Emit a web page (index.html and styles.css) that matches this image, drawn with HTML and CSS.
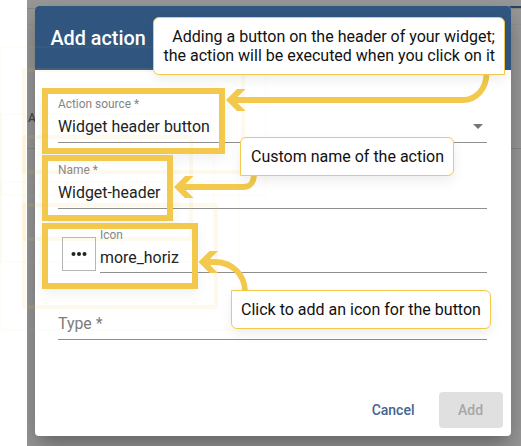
FILE: index.html
```html
<!DOCTYPE html>
<html lang="en">
<head>
<meta charset="utf-8">
<title>Add action</title>
<link rel="stylesheet" href="styles.css">
</head>
<body>
<div class="page">
  <div class="backdrop">
    <span class="rule rule-top"></span>
    <span class="rule rule-head"></span>
    <span class="rule rule-row"></span>
    <span class="bar"></span>
    <span class="letter">A</span>
    <section class="dialog">
      <header class="dialog-header"><h1>Add action</h1></header>
      <form class="fields">
        <div class="field select">
          <label>Action source *</label>
          <div class="value">Widget header button</div>
          <svg class="caret" width="10" height="5" viewBox="0 0 10 5"><path d="M0 0h10L5 5z"/></svg>
        </div>
        <div class="field">
          <label>Name *</label>
          <div class="value">Widget-header</div>
        </div>
        <div class="icon-row">
          <div class="icon-box">
            <svg width="18" height="6" viewBox="0 0 18 6"><circle cx="3.500" cy="3" r="2"/><circle cx="9" cy="3" r="2"/><circle cx="14.500" cy="3" r="2"/></svg>
          </div>
          <div class="field">
            <label>Icon</label>
            <div class="value">more_horiz</div>
          </div>
        </div>
        <div class="field empty">
          <div class="value">Type *</div>
        </div>
      </form>
      <footer class="actions">
        <span class="cancel">Cancel</span>
        <span class="add">Add</span>
      </footer>
    </section>
  </div>

  <div class="frame frame-source"></div>
  <div class="frame frame-name"></div>
  <div class="frame frame-icon"></div>

  <svg class="arrows" width="521" height="446" viewBox="0 0 521 446">
    <g class="shaft">
      <path d="M233 100H463C476 100 486.500 89 486.500 73"/>
      <path d="M181 187H244C250 187 254 182 254 174"/>
      <path d="M206 262H214C233 262 244.500 275 245 291"/>
    </g>
    <g class="head">
      <path d="M226 100l11-11h8.500l-9 9v4l9 9H237z"/>
      <path d="M174 187l11-11h8.500l-9 9v4l9 9H185z"/>
      <path d="M198.500 262l11-11h8.500l-9 9v4l9 9h-8.500z"/>
    </g>
  </svg>

  <div class="callout callout-source">Adding a button on the header of your widget;<br>the action will be executed when you click on it</div>
  <div class="callout callout-name">Custom name of the action</div>
  <div class="callout callout-icon">Click to add an icon for the button</div>
</div>
</body>
</html>
```

FILE: styles.css
```css
* { box-sizing: border-box; }
body {
  margin: 0;
  background: #fff;
  font-family: Roboto, "Liberation Sans", sans-serif;
  overflow: hidden;
}
.page {
  position: relative;
  width: 521px;
  height: 446px;
  overflow: hidden;
}
.backdrop {
  position: relative;
  height: 446px;
  margin-left: 27px;
  padding: 6px 10.500px 10px 7.500px;
  background: #999;
  overflow: hidden;
}
.rule {
  position: absolute;
  left: 0;
  right: 0;
  height: 1px;
  background: #888;
}
.rule-top { top: 8px; }
.rule-head { top: 24px; background: #939393; }
.rule-row { top: 148px; }
.bar {
  position: absolute;
  right: 0;
  top: 6px;
  width: 12px;
  height: 2px;
  background: #2b4563;
}
.letter {
  position: absolute;
  left: 1px;
  top: 111px;
  font-size: 12px;
  font-weight: 500;
  line-height: 14px;
  color: #4b4b4b;
}
.dialog {
  position: relative;
  display: flex;
  flex-direction: column;
  height: 430px;
  background: #fff;
  border-radius: 4px;
  box-shadow: 0 11px 15px -7px rgba(0,0,0,.2), 0 14px 28px 3px rgba(0,0,0,.14), 0 5px 20px 4px rgba(0,0,0,.06);
}
.dialog-header {
  height: 64px;
  padding: 0 16px;
  background: #305680;
  border-radius: 4px 4px 0 0;
  color: #fff;
}
h1 {
  margin: 0;
  font-size: 19.800px;
  font-weight: 500;
  line-height: 65px;
}
.fields {
  flex: 1;
  padding: 27px 24px 0 23.500px;
}
.field {
  position: relative;
  height: 46px;
  margin-bottom: 20px;
  border-bottom: 1px solid #8f8f8f;
}
.field label {
  display: block;
  height: 14px;
  font-size: 11.900px;
  line-height: 14px;
  color: #858585;
}
.value {
  font-size: 15.900px;
  line-height: 20px;
  margin-top: 5.500px;
  color: #222;
}
.caret {
  position: absolute;
  right: 4px;
  top: 27px;
  fill: #757575;
}
.icon-row {
  display: flex;
  gap: 4px;
  padding-left: 4px;
  margin-top: -2px;
}
.icon-row .field { flex: 1; }
.icon-row label { padding-top: 1px; }
.icon-row .value { margin-top: 6.500px; }
.icon-box {
  display: flex;
  align-items: center;
  justify-content: center;
  width: 34px;
  height: 34px;
  margin-top: 10px;
  border: 1px solid #b5b5b5;
}
.icon-box svg { fill: #222; }
.empty .value {
  padding-top: 20px;
  margin-top: 0;
  color: #7c7c7c;
}
.empty { margin-top: 1px; }
.actions {
  display: flex;
  justify-content: flex-end;
  align-items: center;
  gap: 24px;
  height: 52px;
  padding: 0 8px 0 0;
  font-size: 14px;
  font-weight: 500;
}
.cancel { color: #446491; }
.add {
  width: 64px;
  height: 36px;
  border-radius: 4px;
  background: #e0e0e0;
  color: #a6a6a6;
  text-align: center;
  line-height: 36px;
}
.frame {
  position: absolute;
  left: 42px;
  height: 66px;
  border: 6px solid #f2c94c;
  box-shadow: 0 5px 12px rgba(0,0,0,.06);
}
.frame-source { top: 88px; width: 183px; }
.frame-name { top: 155px; width: 131px; }
.frame-icon { top: 223px; width: 156px; }
.frame::before, .frame::after {
  content: "";
  position: absolute;
}
.frame::before {
  inset: -26px;
  border: 4px solid rgba(242,201,76,.1);
}
.frame::after {
  inset: -48px;
  border: 2px solid rgba(242,201,76,.04);
}
.arrows {
  position: absolute;
  left: 0;
  top: 0;
}
.shaft {
  fill: none;
  stroke: #f2c94c;
  stroke-width: 5.800;
}
.head { fill: #f2c94c; }
.callout {
  position: absolute;
  border: 1px solid #f2c94c;
  background: #fff;
  color: #111;
  font-size: 16px;
  line-height: 19px;
  white-space: nowrap;
  box-shadow: 0 5px 12px rgba(0,0,0,.07);
}
.callout-source {
  left: 153px;
  top: 17px;
  width: 352px;
  height: 58px;
  padding: 9px;
  text-align: right;
  border-radius: 6px 6px 0 6px;
}
.callout-name {
  left: 240px;
  top: 137px;
  width: 214px;
  height: 39px;
  padding: 9px 10px;
  border-radius: 6px 6px 6px 0;
}
.callout-icon {
  left: 231px;
  top: 290px;
  width: 260px;
  height: 39px;
  padding: 9px;
  border-radius: 0 6px 6px 6px;
}
```
